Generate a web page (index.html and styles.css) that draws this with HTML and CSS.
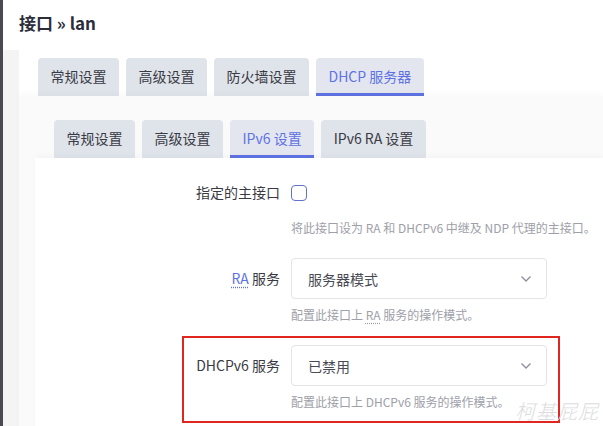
FILE: index.html
```html
<!DOCTYPE html>
<html lang="zh-CN">
<head>
    <meta charset="UTF-8">
    <meta name="viewport" content="width=device-width, initial-scale=1.0">
    <title>接口 » lan</title>
    <link rel="stylesheet" href="styles.css">
</head>
<body>
    <div class="modal">
        <h3 class="modal-title">接口 » lan</h3>
        <div class="main">
            <div class="section">
                <ul class="tabs">
                    <li class="tab">常规设置</li>
                    <li class="tab">高级设置</li>
                    <li class="tab">防火墙设置</li>
                    <li class="tab active">DHCP 服务器</li>
                </ul>
                <div class="panel">
                    <ul class="tabs">
                        <li class="tab">常规设置</li>
                        <li class="tab">高级设置</li>
                        <li class="tab active">IPv6 设置</li>
                        <li class="tab">IPv6 RA 设置</li>
                    </ul>
                    <div class="panel inner">
                        <div class="row first">
                            <label class="row-label">指定的主接口</label>
                            <div class="row-value">
                                <span class="checkbox"></span>
                                <div class="desc">将此接口设为 RA 和 DHCPv6 中继及 NDP 代理的主接口。</div>
                            </div>
                        </div>
                        <div class="row">
                            <label class="row-label"><abbr class="link">RA</abbr> 服务</label>
                            <div class="row-value">
                                <div class="select">
                                    <span>服务器模式</span>
                                    <svg class="chevron" width="12" height="8" viewBox="0 0 12 8"><path d="M1.5 1.5 6 6l4.5-4.5" fill="none" stroke="#8a8f99" stroke-width="1.3"/></svg>
                                </div>
                                <div class="desc">配置此接口上 <abbr>RA</abbr> 服务的操作模式。</div>
                            </div>
                        </div>
                        <div class="row marked">
                            <label class="row-label">DHCPv6 服务</label>
                            <div class="row-value">
                                <div class="select">
                                    <span>已禁用</span>
                                    <svg class="chevron" width="12" height="8" viewBox="0 0 12 8"><path d="M1.5 1.5 6 6l4.5-4.5" fill="none" stroke="#8a8f99" stroke-width="1.3"/></svg>
                                </div>
                                <div class="desc">配置此接口上 DHCPv6 服务的操作模式。</div>
                            </div>
                        </div>
                    </div>
                </div>
            </div>
        </div>
    </div>
    <div class="watermark">柯基屁屁</div>
</body>
</html>
```

FILE: styles.css
```css
html, body {
    margin: 0;
    height: 426px;
    overflow: hidden;
}

body {
    background: #4a4b50;
    font-family: "Noto Sans CJK SC", sans-serif;
    color: #32325d;
    position: relative;
}

.modal {
    margin-left: 3px;
    background: #fff;
    height: 426px;
    display: flex;
    flex-direction: column;
}

.modal-title {
    margin: 0;
    height: 50px;
    flex: none;
    box-sizing: border-box;
    padding: 10px 16px 0;
    font-size: 17px;
    font-weight: 700;
    color: #2b2d3a;
}

.main {
    flex: 1;
    min-height: 0;
    display: flex;
    background: #f4f4f5;
    padding-left: 16px;
}

.section {
    flex: 1;
    display: flex;
    flex-direction: column;
    background: #fff;
    padding-top: 8px;
}

.tabs {
    list-style: none;
    margin: 0 0 0 19px;
    padding: 0;
    display: flex;
    gap: 7px;
    flex: none;
}

.tab {
    height: 38px;
    box-sizing: border-box;
    padding: 0 12.5px;
    line-height: 36px;
    font-size: 14px;
    color: #3a3a44;
    background: #dfe3ea;
    border-radius: 4px 4px 0 0;
    border-bottom: 3px solid transparent;
    white-space: nowrap;
}

.tab.active {
    color: #5e72e4;
    background: #e3e6ef;
    border-bottom-color: #5e72e4;
}

.panel {
    flex: 1;
    display: flex;
    flex-direction: column;
    background: #fafafa;
    box-shadow: 0 -3px 6px rgba(0, 0, 0, 0.025);
    padding: 24px 0 0 16px;
}

.panel.inner {
    display: block;
    background: #fff;
    padding: 26px 0 0 0;
}

.row {
    display: grid;
    grid-template-columns: 256px 256px;
    margin-bottom: 21px;
    position: relative;
}

.row-label {
    text-align: right;
    padding-right: 11px;
    font-size: 14px;
    line-height: 40px;
    color: #3a3a44;
}

.row.first .row-label {
    line-height: 17px;
}

.link {
    color: #5e72e4;
    text-decoration: underline dotted;
    text-underline-offset: 3px;
}

abbr {
    text-decoration: underline dotted;
    text-underline-offset: 3px;
}

.checkbox {
    display: block;
    width: 16px;
    height: 16px;
    box-sizing: border-box;
    border: 1.5px solid #6272c9;
    border-radius: 4px;
    margin: 1px 0 18px;
}

.select {
    height: 41px;
    box-sizing: border-box;
    border: 1px solid #e3e4e8;
    border-radius: 4px;
    display: flex;
    align-items: center;
    justify-content: space-between;
    padding: 0 14px 0 16px;
    font-size: 14px;
    color: #4a4a55;
}

.desc {
    font-size: 12px;
    line-height: 18px;
    color: #9ea0a8;
    white-space: nowrap;
    margin-top: 7px;
}

.row.first .desc {
    margin-top: 0;
}

.row.marked::before {
    content: "";
    position: absolute;
    left: 147px;
    top: -9px;
    width: 374px;
    height: 83px;
    border: 2px solid #e0261f;
    pointer-events: none;
}

.watermark {
    position: absolute;
    right: 4px;
    bottom: 3px;
    font-size: 20px;
    line-height: 24px;
    font-style: italic;
    letter-spacing: 1px;
    color: #dcdce0;
    font-weight: 300;
}
```
